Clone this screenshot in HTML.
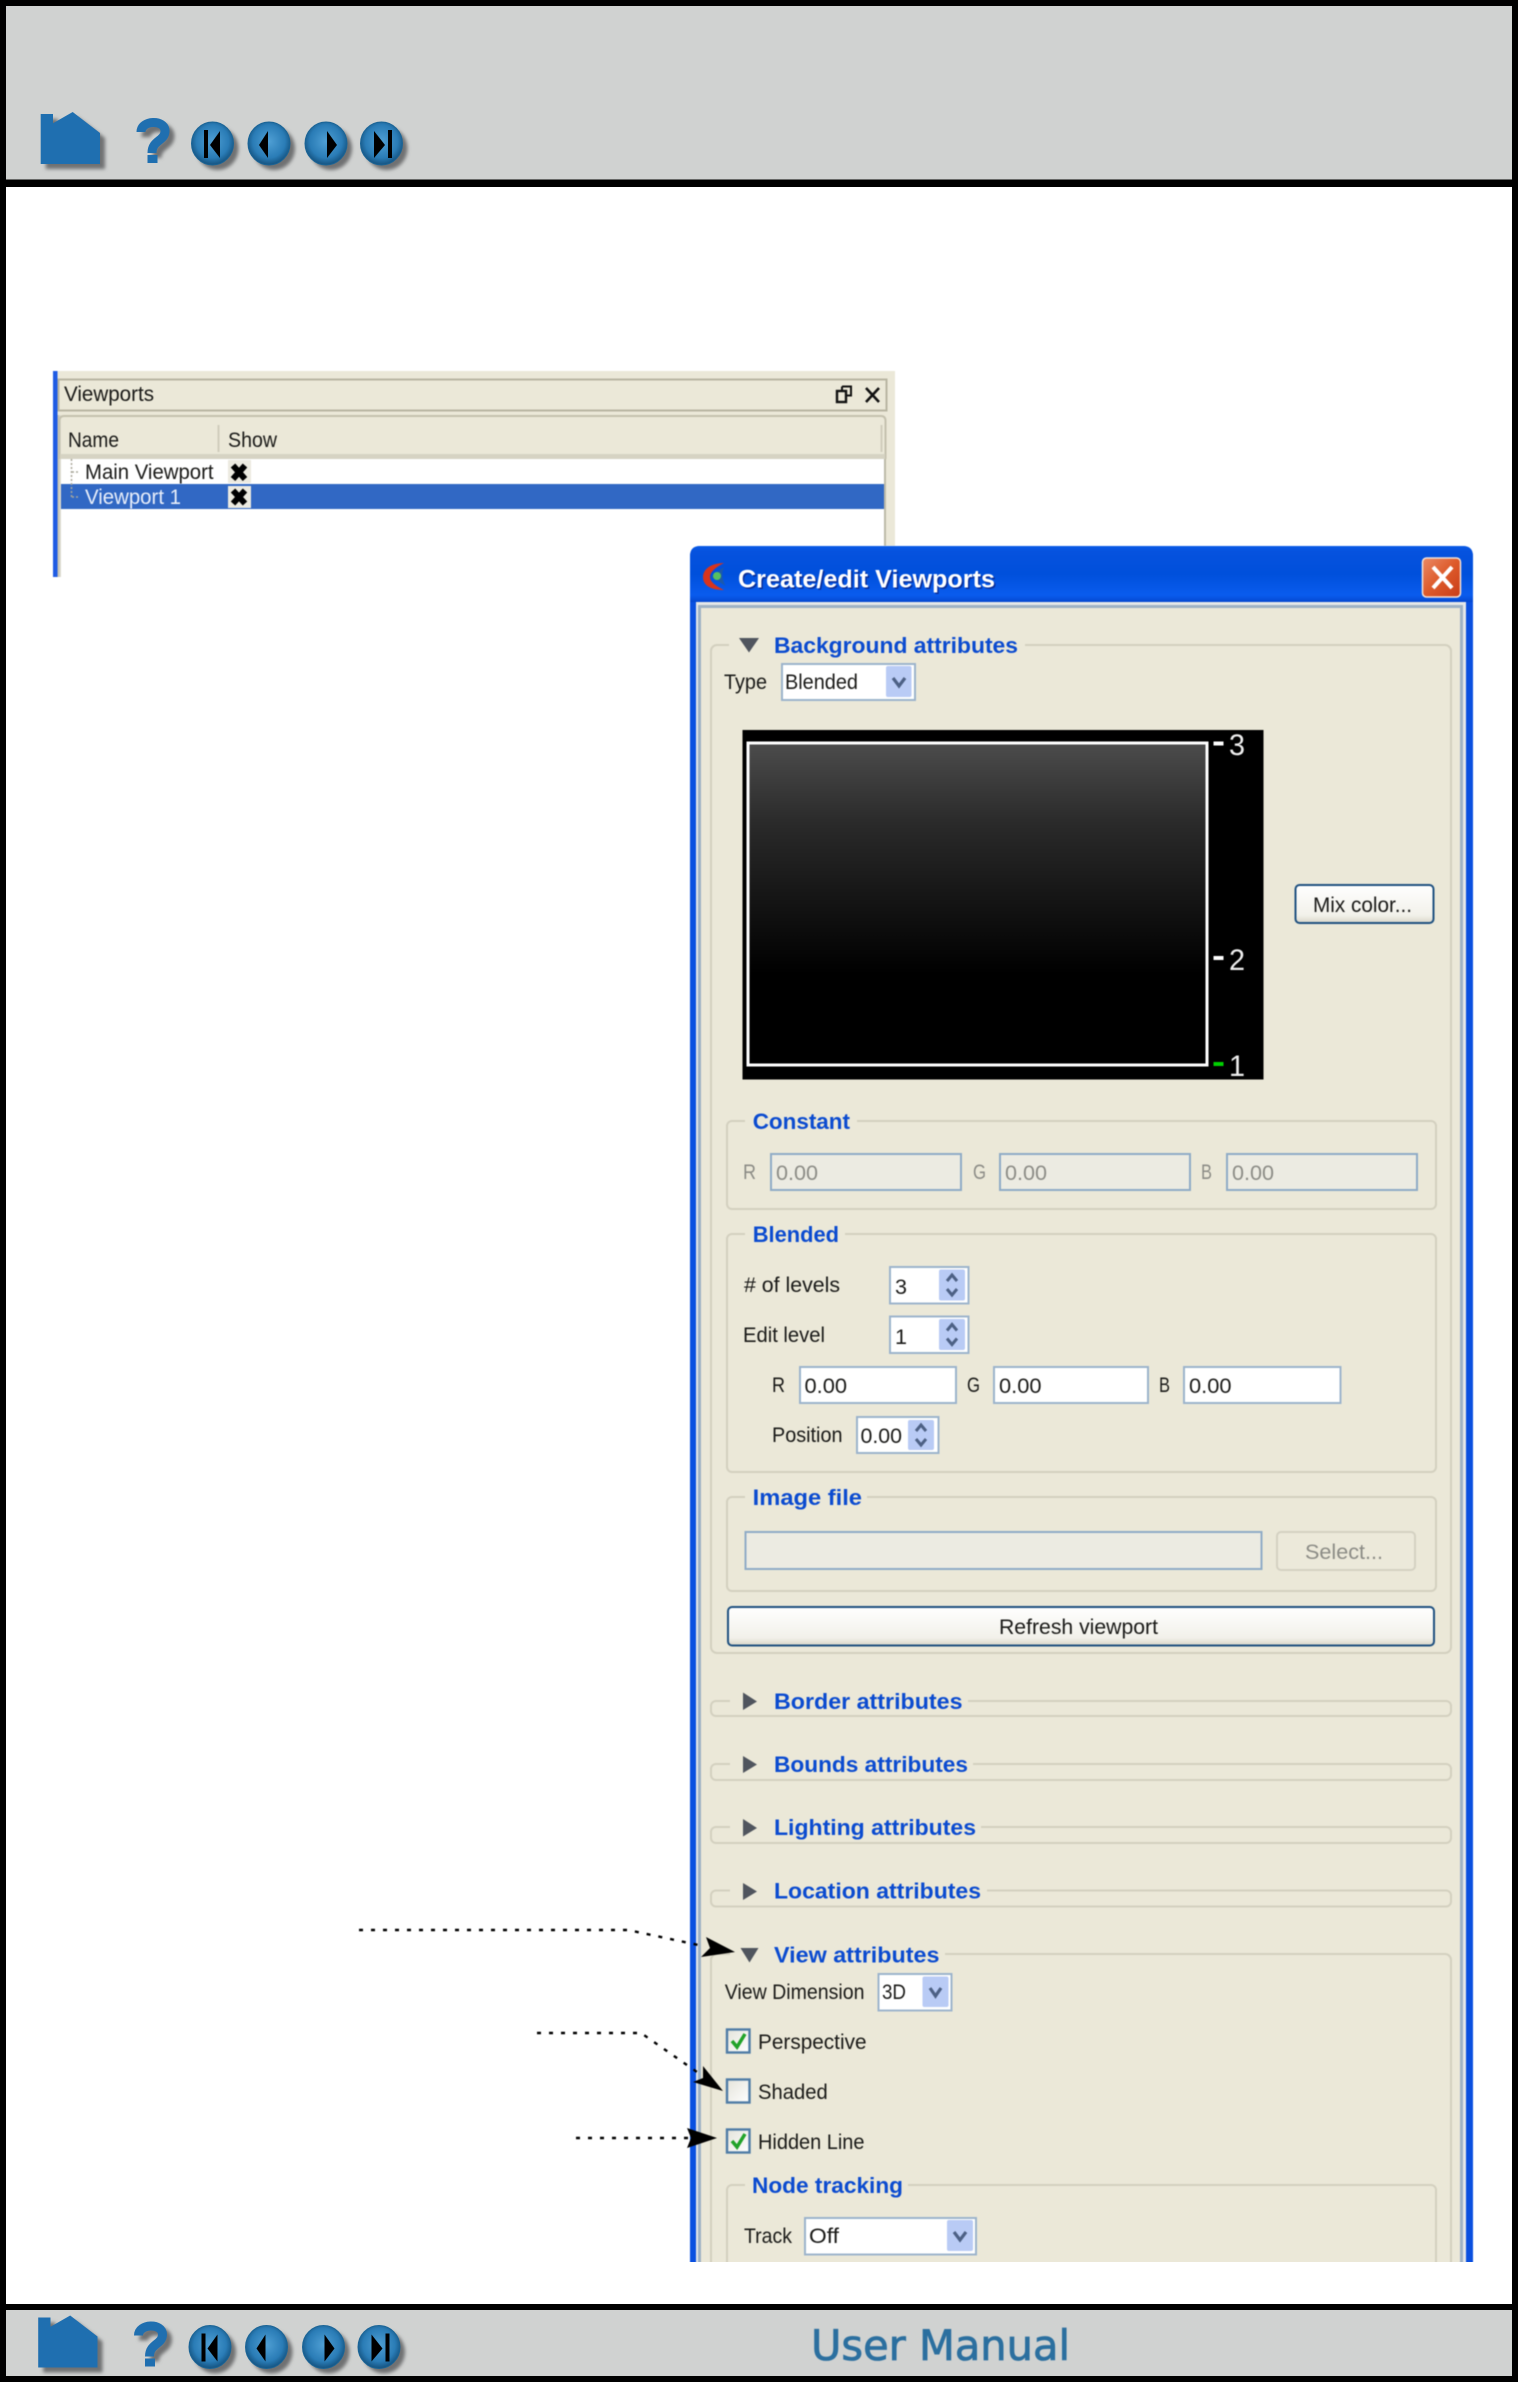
<!DOCTYPE html>
<html><head><meta charset="utf-8"><title>User Manual</title>
<style>
html,body{margin:0;padding:0;background:#fff}
svg{display:block}
text{font-family:"Liberation Sans",sans-serif;font-size:21px;fill:#1a1a18}
.b{font-weight:bold;font-size:22.500px;fill:#0b4bd0}
.g{fill:#8c8c86}
.soft{filter:blur(.45px)}
</style></head><body>
<svg width="1518" height="2382" viewBox="0 0 1518 2382" xmlns="http://www.w3.org/2000/svg">
<defs>
<radialGradient id="ball" cx=".5" cy=".45" r=".55"><stop offset="0" stop-color="#4f9fd4"/><stop offset=".7" stop-color="#2a7cb6"/><stop offset="1" stop-color="#14527f"/></radialGradient>
<linearGradient id="tb" x1="0" y1="0" x2="0" y2="1"><stop offset="0" stop-color="#0a5ae6"/><stop offset=".1" stop-color="#0652de"/><stop offset=".5" stop-color="#0050dc"/><stop offset=".88" stop-color="#0a5cee"/><stop offset="1" stop-color="#0448d0"/></linearGradient>
<linearGradient id="vg" x1="0" y1="0" x2="0" y2="1"><stop offset="0" stop-color="#4c4c4c"/><stop offset=".25" stop-color="#2a2a2a"/><stop offset=".65" stop-color="#060606"/><stop offset=".72" stop-color="#000"/><stop offset="1" stop-color="#000"/></linearGradient>
<linearGradient id="btn" x1="0" y1="0" x2="0" y2="1"><stop offset="0" stop-color="#fff"/><stop offset=".8" stop-color="#f2f1ea"/><stop offset="1" stop-color="#d9d6c8"/></linearGradient>
<linearGradient id="cb" x1="0" y1="0" x2="1" y2="1"><stop offset="0" stop-color="#e4e3da"/><stop offset="1" stop-color="#fff"/></linearGradient>
<linearGradient id="cls" x1="0" y1="0" x2="1" y2="1"><stop offset="0" stop-color="#ea8a66"/><stop offset=".5" stop-color="#dd5a2a"/><stop offset="1" stop-color="#c83c18"/></linearGradient>
<linearGradient id="sidebar" x1="0" y1="0" x2="1" y2="0"><stop offset="0" stop-color="#b4b2a4"/><stop offset="1" stop-color="#e4e2d6"/></linearGradient>
<filter id="sh" x="-20%" y="-20%" width="140%" height="140%"><feGaussianBlur stdDeviation="1.800"/></filter>
<g id="icons">
  <g fill="#6f7172" filter="url(#sh)" transform="translate(5,5)">
    <path d="M40.700 114H53V123.300L72.700 112L100 133V164H40.700Z"/>
    <path d="M141 132C141 120 165 119 165 131C165 141 152 140 152 153" fill="none" stroke="#6f7172" stroke-width="9"/>
    <ellipse cx="212.500" cy="143.500" rx="21" ry="21.500"/><ellipse cx="269" cy="143.500" rx="21" ry="21.500"/><ellipse cx="326" cy="143.500" rx="21" ry="21.500"/><ellipse cx="381.500" cy="143.500" rx="21" ry="21.500"/>
  </g>
  <path fill="#1f6fb0" d="M40.700 114H53V123.300L72.700 112L100 133V164H40.700Z"/>
  <path d="M141 132C141 120 165 119 165 131C165 141 152 140 152 153" fill="none" stroke="#1f6fb0" stroke-width="9"/>
  <rect x="147.500" y="155" width="10" height="8" fill="#1f6fb0"/>
  <g fill="url(#ball)" stroke="#1a6496" stroke-width="1">
    <ellipse cx="212.500" cy="143.500" rx="21" ry="21.500"/><ellipse cx="269" cy="143.500" rx="21" ry="21.500"/><ellipse cx="326" cy="143.500" rx="21" ry="21.500"/><ellipse cx="381.500" cy="143.500" rx="21" ry="21.500"/>
  </g>
  <path fill="#000" d="M204 130h4v28h-4zM220 131V158L210 145ZM268 131V158L259 145ZM327 131V158L337 145ZM374 131V158L385 145ZM388 130h4v28h-4z"/>
</g>
</defs>

<rect width="1518" height="2382" fill="#000"/>
<rect x="6" y="6" width="1506" height="173.500" fill="#d0d2d1"/>
<rect x="6" y="187" width="1506" height="2117" fill="#fff"/>
<use href="#icons"/>

<!-- Viewports panel -->
<g class="soft">
<rect x="57" y="371" width="838" height="88" fill="#ebe8d8"/>
<rect x="884" y="459" width="2" height="87" fill="#bdbaa8"/>
<rect x="886" y="459" width="9" height="87" fill="#ebe8d8"/>
<rect x="57" y="415" width="4" height="162" fill="url(#sidebar)"/>
<rect x="53" y="371" width="4.500" height="206" fill="#1f5ce4"/>
<rect x="58.500" y="379.500" width="828" height="31" fill="none" stroke="#b8b5a2" stroke-width="2"/>
<path d="M59.500 459V421Q59.500 416 64 416H881Q885.500 416 885.500 421V459" fill="none" stroke="#c4c1ae" stroke-width="2"/>
<text x="64" y="401" textLength="90" lengthAdjust="spacingAndGlyphs">Viewports</text>
<path d="M842 386.500h9v9h-4M842 386.500v4" fill="none" stroke="#111" stroke-width="2"/>
<rect x="837" y="391" width="9" height="11" fill="#ebe8d8" stroke="#111" stroke-width="2.400"/>
<path d="M866 388L879 402M879 388L866 402" stroke="#111" stroke-width="2.600"/>
<rect x="60" y="454" width="825" height="5" fill="#d6d3c3"/>
<rect x="61" y="459" width="823" height="126" fill="#fff"/>
<rect x="217.500" y="425" width="2" height="27" fill="#d0cdbc"/>
<rect x="880.500" y="425" width="2" height="27" fill="#d0cdbc"/>
<text x="68" y="447" textLength="51" lengthAdjust="spacingAndGlyphs">Name</text>
<text x="228" y="447" textLength="49" lengthAdjust="spacingAndGlyphs">Show</text>
<text x="85" y="479" textLength="128.500" lengthAdjust="spacingAndGlyphs">Main Viewport</text>
<rect x="61" y="484" width="823" height="25" fill="#3168c4"/>
<text x="85" y="504" textLength="96" lengthAdjust="spacingAndGlyphs" style="fill:#e8eefa">Viewport 1</text>
<path d="M71.500 459V497M72 472H80M72 497H80" stroke="#a9a79a" stroke-width="1.500" stroke-dasharray="2 2" fill="none"/>
<rect x="228" y="460" width="23" height="23" fill="#eceae0"/>
<rect x="228" y="486" width="23" height="22" fill="#eceae0"/>
<path d="M233 465.500L245 479M245 465.500L233 479M233 490.500L245 503.500M245 490.500L233 503.500" stroke="#000" stroke-width="6"/>
</g>

<!-- Dialog -->
<g class="soft">
<rect x="690" y="546" width="783" height="1736" rx="10" fill="#0a50e0"/>
<path d="M690 602V556Q690 546 700 546H1463Q1473 546 1473 556V602Z" fill="url(#tb)"/>
<rect x="696" y="602" width="770" height="1680" fill="#e6e8e8"/>
<rect x="698" y="605" width="765" height="1677" fill="#9fb2c4"/>
<rect x="701" y="608" width="759" height="1674" fill="#ebe8d8"/>

<path d="M724 563C710 563 703 570 703 577C703 585 710 590 724 590C716 586 710 582 710 577C710 572 716 567 724 563Z" fill="#d8341c"/>
<path d="M724 567L711 577L726 586C722 581 721 573 724 567Z" fill="#1d5aa8"/>
<circle cx="717" cy="576" r="4" fill="#58c060"/>
<text x="739.500" y="589" class="b" textLength="257" lengthAdjust="spacingAndGlyphs" style="fill:#0a2f9a;font-size:25px">Create/edit Viewports</text>
<text x="738" y="587.500" class="b" textLength="257" lengthAdjust="spacingAndGlyphs" style="fill:#fff;font-size:25px">Create/edit Viewports</text>
<rect x="1422.500" y="558" width="38" height="39" rx="4" fill="url(#cls)" stroke="#f4e2d8" stroke-width="1.500"/>
<path d="M1433 567L1452 588M1452 567L1433 588" stroke="#fff" stroke-width="4"/>

<!-- group outlines -->
<g fill="none" stroke="#d3d0bf" stroke-width="2">
  <rect x="711" y="645" width="740" height="1008" rx="6"/>
  <rect x="727" y="1121" width="709" height="88" rx="5"/>
  <rect x="727" y="1234" width="709" height="238" rx="5"/>
  <rect x="727" y="1497" width="709" height="94" rx="5"/>
  <rect x="711" y="1701" width="740" height="15" rx="5"/>
  <rect x="711" y="1764" width="740" height="16" rx="5"/>
  <rect x="711" y="1827" width="740" height="16" rx="5"/>
  <rect x="711" y="1890.500" width="740" height="16" rx="5"/>
  <rect x="711" y="1954" width="740" height="400" rx="6"/>
  <rect x="727" y="2185" width="709" height="200" rx="5"/>
</g>
<g fill="#ebe8d8">
  <rect x="729" y="635" width="296" height="20"/>
  <rect x="745" y="1111" width="112" height="20"/>
  <rect x="745" y="1224" width="100" height="20"/>
  <rect x="745" y="1487" width="122" height="20"/>
  <rect x="730" y="1691" width="238" height="20"/>
  <rect x="730" y="1754" width="243" height="20"/>
  <rect x="730" y="1817" width="251" height="20"/>
  <rect x="730" y="1880" width="257" height="20"/>
  <rect x="730" y="1944" width="215" height="20"/>
  <rect x="745" y="2175" width="163" height="20"/>
</g>

<!-- section headers -->
<path fill="#50555e" d="M739 638H759L749 652.500Z"/>
<path fill="#50555e" d="M743 1692.500L757 1701.500L743 1710ZM743 1756L757 1764.500L743 1773ZM743 1819L757 1828L743 1836.500ZM743 1883L757 1891.500L743 1900Z"/>
<path fill="#50555e" d="M740.500 1948H758.500L749.500 1962.500Z"/>
<text x="774" y="653" class="b" textLength="244" lengthAdjust="spacingAndGlyphs">Background attributes</text>
<text x="774" y="1709" class="b" textLength="188.500" lengthAdjust="spacingAndGlyphs">Border attributes</text>
<text x="774" y="1772" class="b" textLength="194" lengthAdjust="spacingAndGlyphs">Bounds attributes</text>
<text x="774" y="1835" class="b" textLength="202" lengthAdjust="spacingAndGlyphs">Lighting attributes</text>
<text x="774" y="1898.500" class="b" textLength="207" lengthAdjust="spacingAndGlyphs">Location attributes</text>
<text x="774" y="1962.500" class="b" textLength="165.500" lengthAdjust="spacingAndGlyphs">View attributes</text>
<text x="752.700" y="1129" class="b" textLength="97.300" lengthAdjust="spacingAndGlyphs">Constant</text>
<text x="752.700" y="1242" class="b" textLength="86.300" lengthAdjust="spacingAndGlyphs">Blended</text>
<text x="752.700" y="1505" class="b" textLength="109.300" lengthAdjust="spacingAndGlyphs">Image file</text>
<text x="752" y="2193" class="b" textLength="151" lengthAdjust="spacingAndGlyphs">Node tracking</text>

<!-- Type combo -->
<text x="724" y="689" textLength="43" lengthAdjust="spacingAndGlyphs">Type</text>
<rect x="782" y="664" width="133" height="36" fill="#fff" stroke="#9cb4cc" stroke-width="2"/>
<text x="785" y="689" textLength="73" lengthAdjust="spacingAndGlyphs">Blended</text>
<rect x="886" y="666" width="25.500" height="31" rx="2" fill="#b9cbf5"/>
<path d="M893 678L899 686L905 678" fill="none" stroke="#4d6185" stroke-width="3.200"/>

<!-- Preview -->
<rect x="742.500" y="730" width="521" height="349.500" fill="#000"/>
<rect x="748" y="743" width="459" height="322" fill="url(#vg)" stroke="#fff" stroke-width="3"/>
<rect x="1213.500" y="741.500" width="10" height="4" fill="#fff"/>
<rect x="1213.500" y="956" width="10" height="4" fill="#fff"/>
<rect x="1213.500" y="1062" width="10" height="4" fill="#00d000"/>
<text x="1229" y="755" textLength="16" lengthAdjust="spacingAndGlyphs" style="font-size:30px;fill:#eee">3</text>
<text x="1229" y="970" textLength="16" lengthAdjust="spacingAndGlyphs" style="font-size:30px;fill:#eee">2</text>
<text x="1229" y="1076" textLength="16" lengthAdjust="spacingAndGlyphs" style="font-size:30px;fill:#eee">1</text>

<rect x="1295.500" y="885" width="138" height="38" rx="4" fill="url(#btn)" stroke="#1f5180" stroke-width="2"/>
<text x="1313" y="912" textLength="99" lengthAdjust="spacingAndGlyphs">Mix color...</text>

<!-- Constant -->
<g fill="#ecebe2" stroke="#8fabc6" stroke-width="2">
  <rect x="771" y="1154" width="190" height="36"/>
  <rect x="1000" y="1154" width="190" height="36"/>
  <rect x="1227" y="1154" width="190" height="36"/>
  <rect x="745.500" y="1532" width="516" height="37"/>
</g>
<text x="743" y="1179" class="g" textLength="13" lengthAdjust="spacingAndGlyphs">R</text>
<text x="973" y="1179" class="g" textLength="13" lengthAdjust="spacingAndGlyphs">G</text>
<text x="1201" y="1179" class="g" textLength="11" lengthAdjust="spacingAndGlyphs">B</text>
<text x="776" y="1180" class="g" textLength="42" lengthAdjust="spacingAndGlyphs">0.00</text>
<text x="1005" y="1180" class="g" textLength="42" lengthAdjust="spacingAndGlyphs">0.00</text>
<text x="1232" y="1180" class="g" textLength="42" lengthAdjust="spacingAndGlyphs">0.00</text>

<!-- Blended -->
<text x="744" y="1292" textLength="96" lengthAdjust="spacingAndGlyphs"># of levels</text>
<text x="743" y="1342" textLength="82" lengthAdjust="spacingAndGlyphs">Edit level</text>
<g fill="#fff" stroke="#9cb4cc" stroke-width="2">
  <rect x="890" y="1267" width="78.500" height="36.500"/>
  <rect x="890" y="1316.500" width="78.500" height="36.500"/>
  <rect x="857" y="1417" width="81.500" height="36"/>
  <rect x="800" y="1367" width="156" height="36"/>
  <rect x="994" y="1367" width="154" height="36"/>
  <rect x="1184" y="1367" width="156.500" height="36"/>
</g>
<g fill="#b9cbf5">
  <rect x="939" y="1269.500" width="26" height="31" rx="2"/>
  <rect x="939" y="1319" width="26" height="31" rx="2"/>
  <rect x="908" y="1420" width="26" height="30" rx="2"/>
</g>
<g fill="none" stroke="#4d6185" stroke-width="3">
  <path d="M947 1281L952 1275L957 1281M947 1289L952 1295L957 1289"/>
  <path d="M947 1330.500L952 1324.500L957 1330.500M947 1338.500L952 1344.500L957 1338.500"/>
  <path d="M916 1431L921 1425L926 1431M916 1439L921 1445L926 1439"/>
</g>
<text x="895" y="1294" textLength="12" lengthAdjust="spacingAndGlyphs">3</text>
<text x="895" y="1344" textLength="12" lengthAdjust="spacingAndGlyphs">1</text>
<text x="772" y="1392" textLength="13" lengthAdjust="spacingAndGlyphs">R</text>
<text x="967" y="1392" textLength="13" lengthAdjust="spacingAndGlyphs">G</text>
<text x="1159" y="1392" textLength="11" lengthAdjust="spacingAndGlyphs">B</text>
<text x="804.500" y="1393" textLength="42.500" lengthAdjust="spacingAndGlyphs">0.00</text>
<text x="999" y="1393" textLength="42.500" lengthAdjust="spacingAndGlyphs">0.00</text>
<text x="1189" y="1393" textLength="42.500" lengthAdjust="spacingAndGlyphs">0.00</text>
<text x="772" y="1442" textLength="70.500" lengthAdjust="spacingAndGlyphs">Position</text>
<text x="860.500" y="1443" textLength="41.500" lengthAdjust="spacingAndGlyphs">0.00</text>

<!-- Image file -->
<rect x="1277" y="1532" width="138" height="38" rx="4" fill="#ece9da" stroke="#d4d1c2" stroke-width="2"/>
<text x="1305" y="1559" class="g" textLength="78" lengthAdjust="spacingAndGlyphs">Select...</text>
<rect x="728" y="1607" width="706" height="38.500" rx="4" fill="url(#btn)" stroke="#1f5180" stroke-width="2"/>
<text x="999" y="1634" textLength="159" lengthAdjust="spacingAndGlyphs">Refresh viewport</text>

<!-- View attributes -->
<text x="724.700" y="1999" textLength="139.800" lengthAdjust="spacingAndGlyphs">View Dimension</text>
<rect x="878.500" y="1974" width="73" height="36.500" fill="#fff" stroke="#9cb4cc" stroke-width="2"/>
<text x="882" y="1999" textLength="24" lengthAdjust="spacingAndGlyphs">3D</text>
<rect x="922.500" y="1976.500" width="26" height="30.500" rx="2" fill="#b9cbf5"/>
<path d="M930 1988L935.500 1996L941 1988" fill="none" stroke="#4d6185" stroke-width="3.200"/>

<g stroke="#4f7ca6" stroke-width="2.400" fill="url(#cb)">
  <rect x="727" y="2029.500" width="22.500" height="23"/>
  <rect x="727" y="2079.500" width="22.500" height="23"/>
  <rect x="727" y="2129.500" width="22.500" height="23"/>
</g>
<path d="M732 2041L737 2047L745 2034M732 2141L737 2147L745 2134" fill="none" stroke="#22a32a" stroke-width="3.500"/>
<text x="758" y="2049" textLength="108.500" lengthAdjust="spacingAndGlyphs">Perspective</text>
<text x="758" y="2099" textLength="69.700" lengthAdjust="spacingAndGlyphs">Shaded</text>
<text x="758" y="2149" textLength="106.500" lengthAdjust="spacingAndGlyphs">Hidden Line</text>

<text x="744" y="2243" textLength="48" lengthAdjust="spacingAndGlyphs">Track</text>
<rect x="805" y="2218" width="171" height="36.500" fill="#fff" stroke="#9cb4cc" stroke-width="2"/>
<text x="809" y="2243" textLength="30" lengthAdjust="spacingAndGlyphs">Off</text>
<rect x="947" y="2220" width="26" height="31" rx="2" fill="#b9cbf5"/>
<path d="M954 2232L960 2240L966 2232" fill="none" stroke="#4d6185" stroke-width="3.200"/>

<!-- arrows -->
<g fill="none" stroke="#000" stroke-width="2.400" stroke-dasharray="4 8">
  <path d="M359 1930H628L703 1946"/>
  <path d="M537 2033H641L697 2072"/>
  <path d="M576 2138H692"/>
</g>
<path d="M735 1952L706 1937L710 1948L701 1957Z" fill="#000"/>
<path d="M723 2091L703 2066L703 2078L693 2082Z" fill="#000"/>
<path d="M717 2138L687 2128L691 2138L687 2148Z" fill="#000"/>
</g>

<!-- bottom bar drawn above the dialog -->
<rect x="0" y="2262" width="1518" height="120" fill="#000"/>
<rect x="6" y="2262" width="1506" height="42" fill="#fff"/>
<rect x="6" y="2310" width="1506" height="66" fill="#d0d2d1"/>
<use href="#icons" transform="translate(-2.500,2203.500)"/>
<text x="811" y="2360" textLength="259" lengthAdjust="spacingAndGlyphs" style="font-family:'DejaVu Sans',sans-serif;font-size:42px;fill:#2b6f9f;stroke:#2b6f9f;stroke-width:.8px" class="soft">User Manual</text>
</svg>
</body></html>
